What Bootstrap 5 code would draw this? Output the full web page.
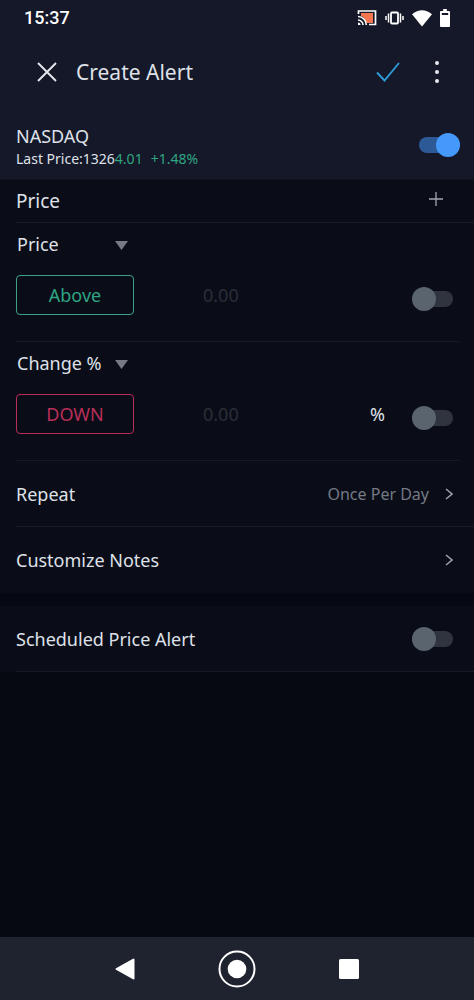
<!DOCTYPE html>
<html lang="en">
<head>
<meta charset="utf-8">
<meta name="viewport" content="width=device-width, initial-scale=1">
<title>Create Alert</title>
<link href="https://cdn.jsdelivr.net/npm/bootstrap@5.3.0/dist/css/bootstrap.min.css" rel="stylesheet">
<style>
  :root {
    --bar: #151828;
    --panel: #0a0d18;
    --page: #060912;
    --line: #161a25;
    --ink: #dfe1e8;
    --up: #2fa583;
    --down: #b92d58;
  }
  body {
    background: var(--page);
    color: var(--ink);
    font-family: "Noto Sans", "Open Sans", sans-serif;
    font-size: 18px;
    line-height: 24px;
  }
  button, select, input { font-family: inherit; color: inherit; }
  svg { display: block; flex: none; }
  .bar { background: var(--bar); }
  .panel { background: var(--panel); }
  .status { height: 36px; padding: 0 24px; }
  .clock { font: 500 18px/24px Roboto, sans-serif; color: #fff; }
  .titlebar { height: 74px; padding: 0 25px 2px 34px; }
  .page-title { font-size: 21px; line-height: 28px; font-weight: 400; }
  .icon-btn { background: none; border: 0; padding: 0; display: grid; place-items: center; height: 40px; width: 26px; }
  .more { width: 24px; }
  .symbol { height: 70px; padding: 0 14px 0 16px; border-bottom: 1px solid #11141f; }
  .symbol-name { font-size: 18px; font-weight: 400; line-height: 24px; }
  .quote { font-size: 14px; line-height: 22px; }
  .up { color: var(--up); }
  .inset { margin-left: 16px; border-bottom: 1px solid var(--line); }
  .section-head { height: 43px; padding-right: 25px; }
  .section-title { font-size: 19px; font-weight: 400; line-height: 24px; }
  .rule { margin-right: 15px; padding: 8px 0 26px; }
  .kind {
    display: block; width: 111px; height: 26px; margin-left: 1px; padding: 0; border: 0; appearance: none;
    font-size: 18px; line-height: 26px;
    background: url("data:image/svg+xml,%3Csvg xmlns='http://www.w3.org/2000/svg' viewBox='0 0 13 9'%3E%3Cpath d='M0 0h13L6.500 9z' fill='%23757a84'/%3E%3C/svg%3E") no-repeat right 10px / 13px 9px;
    background-position: right 10px;
  }
  .rule-row { margin-top: 18px; padding-right: 6px; }
  .side { width: 118px; height: 40px; background: none; border-radius: 4px; border: 1px solid; font-size: 18px; line-height: 24px; padding: 0; }
  .side-up { color: var(--up); border-color: #3fa184; }
  .side-down { color: var(--down); }
  .amount { background: none; border: 0; padding: 0; margin-left: 69px; width: 0; height: 40px; font-size: 18px; }
  .amount::placeholder { color: #2b2e37; opacity: 1; }
  .unit { width: 42px; flex: none; line-height: 40px; }
  .toggle { appearance: none; display: grid; align-items: center; width: 41px; height: 24px; margin: 0; flex: none; }
  .toggle::before, .toggle::after { content: ""; grid-area: 1 / 1; }
  .toggle::before { height: 16px; border-radius: 8px; background: #2f343f; }
  .toggle::after { width: 24px; height: 24px; border-radius: 50%; background: #5a646e; }
  .toggle:checked::before { background: #2d5a97; }
  .toggle:checked::after { background: #4599fa; justify-self: end; }
  .low { margin-bottom: 4px; }
  .setting { height: 66px; padding-right: 21px; color: var(--ink); text-decoration: none; }
  .setting-value { font-size: 16px; color: #747984; }
  .schedule { margin-top: 13px; }
  .navkeys { background: #1f222f; height: 63px; }
  .navkeys .icon-btn { width: 38px; }
  .navkeys-row { gap: 74px; }
</style>
</head>
<body class="d-flex flex-column min-vh-100">
  <header class="bar">
    <div class="status d-flex align-items-center justify-content-between">
      <span class="clock">15:37</span>
      <div class="d-flex align-items-center">
        <svg width="20" height="18" viewBox="0 0 20 18" fill="none"><path d="M4 4h12v10H9Q8 8 4 7z" fill="#f4754f"/><path d="M1.500 5V2h17v13.500H12" stroke="#fff" stroke-width="1.700"/><path d="M1 7.500A8.500 8.500 0 0 1 9.300 16M1 11a5 5 0 0 1 5 5" stroke="#fff" stroke-width="1.600"/><path d="M1 13.500A2.500 2.500 0 0 1 3.500 16H1z" fill="#fff"/></svg>
        <svg class="ms-2" width="19" height="14" viewBox="0 0 19 14" fill="none" stroke="#fff"><rect x="6" y="1.500" width="7" height="11" rx="1" stroke-width="1.800"/><path d="M3.500 2.500v9M15.500 2.500v9M1 5v4M18 5v4" stroke-width="1.500"/></svg>
        <svg class="ms-2" width="20" height="17" viewBox="0 0 20 17"><path d="M0 4.200Q10-3.500 20 4.200L10 16.500z" fill="#fff"/></svg>
        <svg class="ms-2" width="10" height="18" viewBox="0 0 11 18" preserveAspectRatio="none"><path fill-rule="evenodd" d="M3.500 0h4v2H10a1 1 0 0 1 1 1v14a1 1 0 0 1-1 1H1a1 1 0 0 1-1-1V3a1 1 0 0 1 1-1h2.500zM2 4v2h7V4z" fill="#fff"/></svg>
      </div>
    </div>
    <div class="titlebar d-flex align-items-center">
      <button class="icon-btn" type="button" aria-label="Close"><svg width="20" height="20" viewBox="0 0 20 20"><path d="M1 1l18 18M19 1L1 19" stroke="#e6e8ee" stroke-width="1.900"/></svg></button>
      <h1 class="page-title mb-0 ms-3 flex-grow-1">Create Alert</h1>
      <button class="icon-btn" type="button" aria-label="Save"><svg width="24" height="20" viewBox="0 0 24 20" fill="none"><path d="M1 10.500l7.500 8L23 1" stroke="#2d9bd9" stroke-width="1.900"/></svg></button>
      <button class="icon-btn more ms-4 me-n1" type="button" aria-label="More"><svg width="4" height="24" viewBox="0 0 4 24" fill="#e6e8ee"><circle cx="2" cy="3" r="2"/><circle cx="2" cy="12" r="2"/><circle cx="2" cy="21" r="2"/></svg></button>
    </div>
    <div class="symbol d-flex align-items-center justify-content-between">
      <div class="pt-1">
        <h2 class="symbol-name mb-0"><label for="active">NASDAQ</label></h2>
        <div class="quote">Last Price:1326<span class="up">4.01</span><span class="up ms-2">+1.48%</span></div>
      </div>
      <input class="toggle" type="checkbox" role="switch" id="active" checked>
    </div>
  </header>

  <main class="flex-grow-1">
    <section class="panel">
      <div class="inset section-head d-flex align-items-center justify-content-between">
        <h2 class="section-title mb-0">Price</h2>
        <button class="icon-btn pb-1" type="button" aria-label="Add condition"><svg width="14" height="14" viewBox="0 0 14 14"><path d="M7 0v14M0 7h14" stroke="#a3a7b0" stroke-width="1.300"/></svg></button>
      </div>
      <div class="inset rule">
        <select class="kind" aria-label="First condition"><option>Price</option></select>
        <div class="rule-row d-flex align-items-end">
          <button class="side side-up flex-shrink-0" type="button">Above</button>
          <input class="amount flex-grow-1" type="text" inputmode="decimal" placeholder="0.00" aria-label="Price">
          <input class="toggle low" type="checkbox" role="switch" aria-label="Enable price condition">
        </div>
      </div>
      <div class="inset rule">
        <select class="kind" aria-label="Second condition"><option>Change %</option></select>
        <div class="rule-row d-flex align-items-end">
          <button class="side side-down flex-shrink-0" type="button">DOWN</button>
          <input class="amount flex-grow-1" type="text" inputmode="decimal" placeholder="0.00" aria-label="Change in percent">
          <span class="unit">%</span>
          <input class="toggle low" type="checkbox" role="switch" aria-label="Enable change condition">
        </div>
      </div>
      <a class="inset setting d-flex align-items-center" href="#repeat">
        <span class="flex-grow-1">Repeat</span>
        <span class="setting-value me-3">Once Per Day</span>
        <svg width="8" height="12" viewBox="0 0 8 12" fill="none"><path d="M1 1l6 5-6 5" stroke="#9ea2aa" stroke-width="1.500"/></svg>
      </a>
      <a class="inset setting border-0 d-flex align-items-center" href="#notes">
        <span class="flex-grow-1">Customize Notes</span>
        <svg width="8" height="12" viewBox="0 0 8 12" fill="none"><path d="M1 1l6 5-6 5" stroke="#9ea2aa" stroke-width="1.500"/></svg>
      </a>
    </section>
    <section class="panel schedule">
      <div class="inset setting d-flex align-items-center justify-content-between">
        <label for="scheduled">Scheduled Price Alert</label>
        <input class="toggle" type="checkbox" role="switch" id="scheduled">
      </div>
    </section>
  </main>

  <nav class="navkeys" aria-label="System">
    <div class="navkeys-row d-flex h-100 align-items-center justify-content-center">
      <button class="icon-btn" type="button" aria-label="Back"><svg width="20" height="22" viewBox="0 0 20 22"><path d="M1.500 11L18.500 1.500v19z" fill="#fff" stroke="#fff" stroke-width="2" stroke-linejoin="round"/></svg></button>
      <button class="icon-btn" type="button" aria-label="Home"><svg width="38" height="38" viewBox="0 0 38 38"><circle cx="19" cy="19" r="17.500" fill="none" stroke="#fff" stroke-width="2"/><circle cx="19" cy="19" r="9.300" fill="#fff"/></svg></button>
      <button class="icon-btn" type="button" aria-label="Recent apps"><svg width="20" height="20" viewBox="0 0 20 20"><rect width="20" height="20" rx="1.500" fill="#fff"/></svg></button>
    </div>
  </nav>
<script src="https://cdn.jsdelivr.net/npm/bootstrap@5.3.0/dist/js/bootstrap.bundle.min.js"></script>
</body>
</html>
